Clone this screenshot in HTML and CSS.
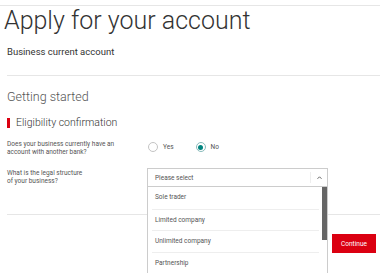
FILE: index.html
```html
<!DOCTYPE html>
<html lang="en">
<head>
  <meta charset="UTF-8">
  <title>Apply for your account</title>
  <link rel="stylesheet" href="styles.css">
</head>
<body>
  <div class="page">
    <h1 class="page-title">Apply for your account</h1>
    <p class="product">Business current account</p>

    <div class="section">
      <h2 class="section-title">Getting started</h2>
      <h3 class="sub-title">Eligibility confirmation</h3>

      <!-- Question 1 -->
      <div class="question">
        <div class="label">Does your business currently have an account with another bank?</div>
        <div class="radios">
          <label class="radio"><span class="dot"></span>Yes</label>
          <label class="radio checked"><span class="dot"></span>No</label>
        </div>
      </div>

      <!-- Question 2 -->
      <div class="question q-select">
        <div class="label">What is the legal structure<br>of your business?</div>
        <div class="select-wrap">
          <div class="select">
            <span>Please select</span>
            <span class="chev">
              <svg width="7" height="5" viewBox="0 0 7 5"><path d="M1.5 3.8 L3.5 1.8 L5.5 3.8" fill="none" stroke="#555" stroke-width="0.9"/></svg>
            </span>
          </div>
          <ul class="options">
            <li>Sole trader</li>
            <li>Limited company</li>
            <li>Unlimited company</li>
            <li>Partnership</li>
          </ul>
        </div>
      </div>
    </div>

    <div class="actions">
      <button class="btn-continue">Continue</button>
    </div>
  </div>
</body>
</html>
```

FILE: styles.css
```css
body {
  margin: 0;
  min-height: 274px;
  background: #fff;
  font-family: Roboto, "Liberation Sans", sans-serif;
  color: #333;
}

.page {
  margin-top: 5px;
  border-top: 1px solid #e6e6e6;
  padding-left: 7px;
  padding-bottom: 30px;
}

/* Headings */
.page-title {
  margin: 0 0 0 -3px;
  font-size: 25px;
  font-weight: 300;
  line-height: 30px;
  color: #333;
}

.product {
  margin: 10px 0 0;
  font-size: 9.5px;
  line-height: 12px;
  color: #333;
}

.section {
  margin-top: 17px;
  border-top: 1px solid #e6e6e6;
  border-bottom: 1px solid #e6e6e6;
  padding-bottom: 27px;
}

.section-title {
  margin: 13px 0 0;
  font-size: 12.5px;
  font-weight: 300;
  line-height: 16px;
  color: #555;
}

.sub-title {
  margin: 12px 0 0;
  display: flex;
  align-items: center;
  gap: 6px;
  font-size: 10.5px;
  font-weight: 300;
  line-height: 12px;
  color: #333;
}

.sub-title::before {
  content: "";
  width: 3px;
  height: 10px;
  background: #db0011;
}

/* Questions */
.question {
  display: flex;
  align-items: flex-start;
  margin-top: 11px;
}

.label {
  width: 120px;
  font-size: 6.5px;
  line-height: 8px;
  color: #555;
}

.radios {
  display: flex;
  gap: 22px;
  margin: 2px 0 0 21px;
}

.radio {
  display: flex;
  align-items: center;
  gap: 5px;
  font-size: 6.5px;
  color: #555;
  height: 10px;
}

.radio .dot {
  width: 10px;
  height: 10px;
  border: 1px solid #c4c4c4;
  border-radius: 50%;
  box-sizing: border-box;
  display: flex;
  align-items: center;
  justify-content: center;
}

.radio.checked .dot {
  border-color: #8bb;
}

.radio.checked .dot::after {
  content: "";
  width: 5px;
  height: 5px;
  border-radius: 50%;
  background: #00847f;
}

.q-select {
  margin-top: 12px;
}

.q-select .label {
  margin-top: 1px;
}

.select-wrap {
  position: relative;
  margin-left: 20px;
  width: 181px;
}

.select {
  height: 19px;
  box-sizing: border-box;
  border: 1px solid #ccc;
  display: flex;
  align-items: center;
  justify-content: space-between;
  padding: 0 4px 0 7px;
  font-size: 6.5px;
  color: #555;
}

.chev {
  border-left: 1px solid #eee;
  padding-left: 5px;
  height: 11px;
  display: flex;
  align-items: center;
}

/* Dropdown list lies over the rest of the form */
.options {
  position: absolute;
  top: 19px;
  left: 0;
  width: 181px;
  box-sizing: border-box;
  margin: 0;
  padding: 0 8px 0 4px;
  list-style: none;
  background: #fff;
  border-left: 1px solid #ccc;
  border-right: 1px solid #ccc;
  font-size: 6.5px;
  color: #555;
  z-index: 2;
}

.options::after {
  content: "";
  position: absolute;
  top: 0;
  right: 0;
  width: 5px;
  height: 53px;
  background: #666;
}

.options li {
  height: 20.5px;
  line-height: 20.5px;
  padding-left: 3px;
  border-bottom: 1px solid #eee;
}

.options li:first-child {
  height: 21.5px;
  line-height: 20px;
}

.options li:last-child {
  border-bottom: none;
}

/* Actions */
.actions {
  display: flex;
  justify-content: flex-end;
  padding: 19px 4px 0 0;
}

.btn-continue {
  width: 44px;
  height: 19px;
  border: none;
  background: #db0011;
  color: #fff;
  font-family: Roboto, "Liberation Sans", sans-serif;
  font-size: 6.5px;
  padding: 0;
}
```
